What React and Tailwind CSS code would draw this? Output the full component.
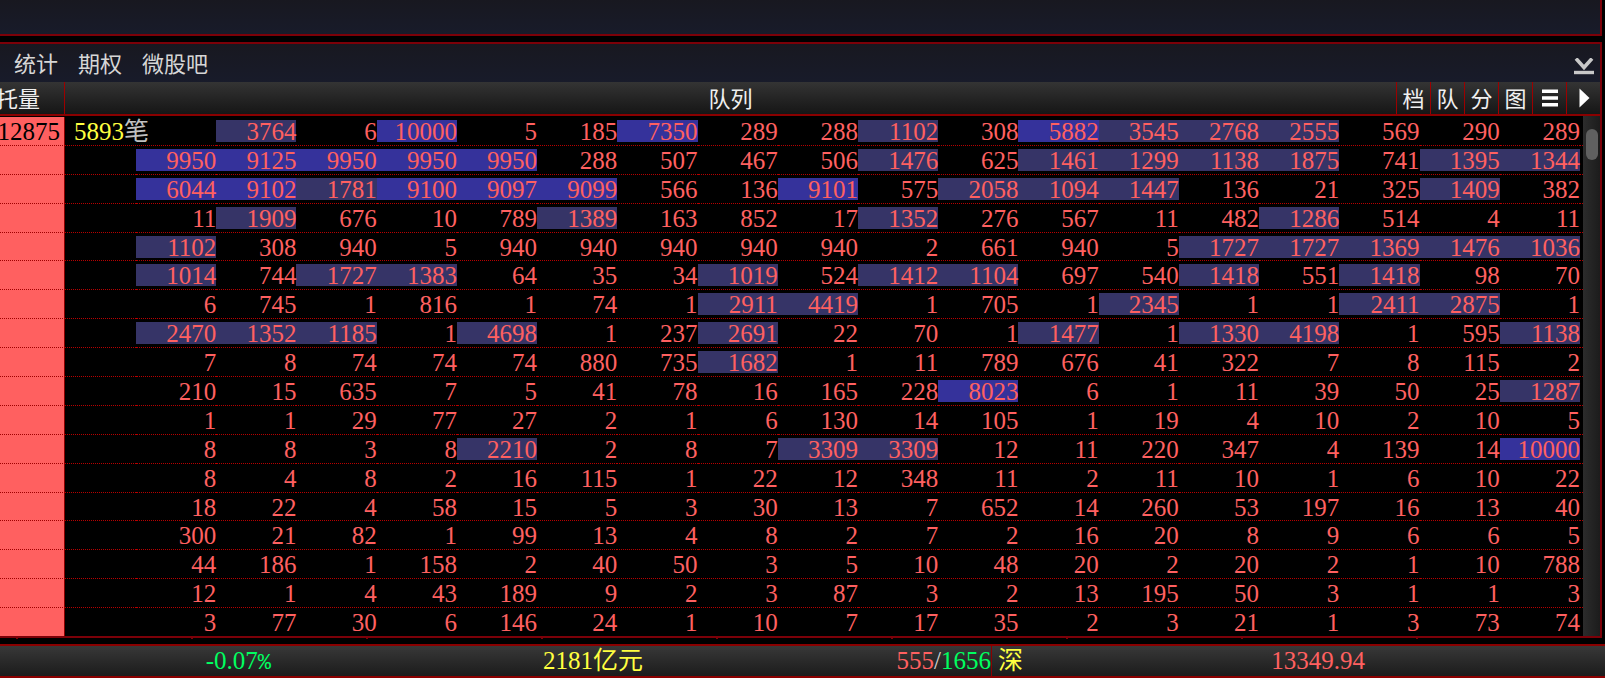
const ROWS = [
  [3764, 6, 10000, 5, 185, 7350, 289, 288, 1102, 308, 5882, 3545, 2768, 2555, 569, 290, 289],
  [9950, 9125, 9950, 9950, 9950, 288, 507, 467, 506, 1476, 625, 1461, 1299, 1138, 1875, 741, 1395, 1344],
  [6044, 9102, 1781, 9100, 9097, 9099, 566, 136, 9101, 575, 2058, 1094, 1447, 136, 21, 325, 1409, 382],
  [11, 1909, 676, 10, 789, 1389, 163, 852, 17, 1352, 276, 567, 11, 482, 1286, 514, 4, 11],
  [1102, 308, 940, 5, 940, 940, 940, 940, 940, 2, 661, 940, 5, 1727, 1727, 1369, 1476, 1036],
  [1014, 744, 1727, 1383, 64, 35, 34, 1019, 524, 1412, 1104, 697, 540, 1418, 551, 1418, 98, 70],
  [6, 745, 1, 816, 1, 74, 1, 2911, 4419, 1, 705, 1, 2345, 1, 1, 2411, 2875, 1],
  [2470, 1352, 1185, 1, 4698, 1, 237, 2691, 22, 70, 1, 1477, 1, 1330, 4198, 1, 595, 1138],
  [7, 8, 74, 74, 74, 880, 735, 1682, 1, 11, 789, 676, 41, 322, 7, 8, 115, 2],
  [210, 15, 635, 7, 5, 41, 78, 16, 165, 228, 8023, 6, 1, 11, 39, 50, 25, 1287],
  [1, 1, 29, 77, 27, 2, 1, 6, 130, 14, 105, 1, 19, 4, 10, 2, 10, 5],
  [8, 8, 3, 8, 2210, 2, 8, 7, 3309, 3309, 12, 11, 220, 347, 4, 139, 14, 10000],
  [8, 4, 8, 2, 16, 115, 1, 22, 12, 348, 11, 2, 11, 10, 1, 6, 10, 22],
  [18, 22, 4, 58, 15, 5, 3, 30, 13, 7, 652, 14, 260, 53, 197, 16, 13, 40],
  [300, 21, 82, 1, 99, 13, 4, 8, 2, 7, 2, 16, 20, 8, 9, 6, 6, 5],
  [44, 186, 1, 158, 2, 40, 50, 3, 5, 10, 48, 20, 2, 20, 2, 1, 10, 788],
  [12, 1, 4, 43, 189, 9, 2, 3, 87, 3, 2, 13, 195, 50, 3, 1, 1, 3],
  [3, 77, 30, 6, 146, 24, 1, 10, 7, 17, 35, 2, 3, 21, 1, 3, 73, 74],
];

const TABS = ["统计", "期权", "微股吧"];
const MODES = ["档", "队", "分", "图"];

const cellBg = (n) => {
  if (n >= 5000) return "bg-[#35329b]";
  if (n >= 1000) return "bg-[#363467]";
  return "";
};

const TabBar = () => (
  <nav className="flex h-[38px] shrink-0 items-center gap-5 bg-linear-to-b from-[#181820] to-[#181b2a] pt-1 pl-[14px] pr-[5px] text-[22px] leading-[24px] text-[#d6d6d6]">
    {TABS.map((t) => (
      <button key={t} type="button">{t}</button>
    ))}
    <button type="button" aria-label="收起" className="ml-auto pt-1">
      <svg width="22" height="18" viewBox="0 0 22 18" fill="none" stroke="#c8c8c8">
        <path d="M3 0.5 L11 9.5 L19 0.5" strokeWidth="3.6" />
        <path d="M1 14.5 H21" strokeWidth="3.4" />
      </svg>
    </button>
  </nav>
);

const HeadButton = ({ children, label }) => (
  <button
    type="button"
    aria-label={label}
    className="flex w-[34px] items-center justify-center border-l border-[#9c0000]"
  >
    {children}
  </button>
);

const QueueHeader = () => (
  <div className="flex h-[34px] shrink-0 border-b-2 border-[#8a0000] bg-linear-to-b from-[#343434] to-[#161616] text-[22px] leading-[24px] text-[#f0f0f0]">
    <div className="flex w-[65px] items-center justify-end border-r border-[#9c0000] pt-1 pr-6 whitespace-nowrap">
      托量
    </div>
    <div className="flex flex-1 items-center justify-center pt-1">队列</div>
    {MODES.map((m) => (
      <HeadButton key={m}>
        <span className="pt-1">{m}</span>
      </HeadButton>
    ))}
    <HeadButton label="列表">
      <svg width="18" height="18" viewBox="0 0 18 18" fill="#fff">
        <path d="M1 0.5h16v3.4H1zM1 7.3h16v3.4H1zM1 14.1h16v3.4H1z" />
      </svg>
    </HeadButton>
    <HeadButton label="展开">
      <svg width="12" height="20" viewBox="0 0 12 20" fill="#fff">
        <path d="M1.5 0.5 L11.5 10 L1.5 19.5z" />
      </svg>
    </HeadButton>
  </div>
);

const QueueRow = ({ row, first, last }) => {
  const line = last ? "" : "border-b border-dotted border-[#b80000]";
  return (
    <tr>
      <td className={`border-r border-r-[#8a0000] bg-[#ff6060] p-0 ${last ? "" : "border-b [border-bottom-style:dotted] border-b-[#a00000]"}`}>
        <div className="flex h-[22px] justify-end pr-1 leading-[24px] text-black">{first && "12875"}</div>
      </td>
      <td colSpan={first ? 2 : 1} className={`p-0 pl-[9px] ${line}`}>
        {first && (
          <div className="h-[22px] leading-[24px] whitespace-nowrap text-[#ffff40]">
            5893<span className="text-[#c0c0c0]">笔</span>
          </div>
        )}
      </td>
      {row.map((n, i) => (
        <td key={i} className={`p-0 text-right ${line}`}>
          <div className={`h-[22px] leading-[24px] ${cellBg(n)}`}>{n}</div>
        </td>
      ))}
      <td className={`p-0 ${line}`}></td>
    </tr>
  );
};

const QueueTable = () => (
  <div className="flex min-h-0 flex-1">
    <div className="min-w-0 flex-1 pt-px">
      <table className="h-full w-full table-fixed border-separate border-spacing-0 text-[25px] text-[#ff6060]">
        <colgroup>
          <col className="w-[65px]" />
          <col className="w-[71px]" />
          <col span={18} />
          <col className="w-[3px]" />
        </colgroup>
        <tbody>
          {ROWS.map((row, i) => (
            <QueueRow key={i} row={row} first={i === 0} last={i === ROWS.length - 1} />
          ))}
        </tbody>
      </table>
    </div>
    <div className="w-[17px] bg-linear-to-r from-[#2c2c2c] to-[#1c1c1c] pt-[13px]">
      <div className="mx-auto h-[31px] w-3 rounded-full bg-[#606060]"></div>
    </div>
  </div>
);

const StatusBar = () => (
  <footer className="grid h-[34px] shrink-0 grid-cols-[271fr_372fr_349fr_373fr_240fr] items-stretch border-y-2 border-[#8a0000] bg-linear-to-b from-[#383838] to-[#1c1c1c] text-right text-[25px] leading-[30px]">
    <div className="text-[#00ff60]">
      -0.07<span className="font-['Liberation_Mono'] text-[22px]">%</span>
    </div>
    <div className="text-[#ffff40]">2181亿元</div>
    <div className="border-r border-[#8a0000] text-[#ff6060]">
      555<span className="text-[#d0d0d0]">/</span>
      <span className="text-[#00ff60]">1656</span>
    </div>
    <div className="flex justify-between pl-[6px] text-[#ff6060]">
      <span className="text-[#ffff40]">深</span>
      <span>13349.94</span>
    </div>
  </footer>
);

export default function App() {
  return (
    <div className="flex h-screen min-h-[660px] flex-col overflow-hidden bg-black font-['Liberation_Serif','Noto_Sans_CJK_SC',serif]">
      <div className="mr-[3px] h-[36px] shrink-0 border-r-2 border-b-2 border-[#7c0008] bg-linear-to-b from-[#181820] to-[#181b2a]"></div>
      <main className="mt-[6px] mr-[3px] flex min-h-0 flex-1 flex-col border-y-2 border-r-2 border-[#7c0008]">
        <TabBar />
        <QueueHeader />
        <QueueTable />
      </main>
      {/* scale ticks under the queue */}
      <div className="flex h-[6px] shrink-0 pl-[16px]">
        {Array.from({ length: 9 }, (_, i) => (
          <div key={i} className="h-[1px] w-[175px] shrink-0 border-l-2 border-[#7c0008]"></div>
        ))}
      </div>
      <StatusBar />
    </div>
  );
}
